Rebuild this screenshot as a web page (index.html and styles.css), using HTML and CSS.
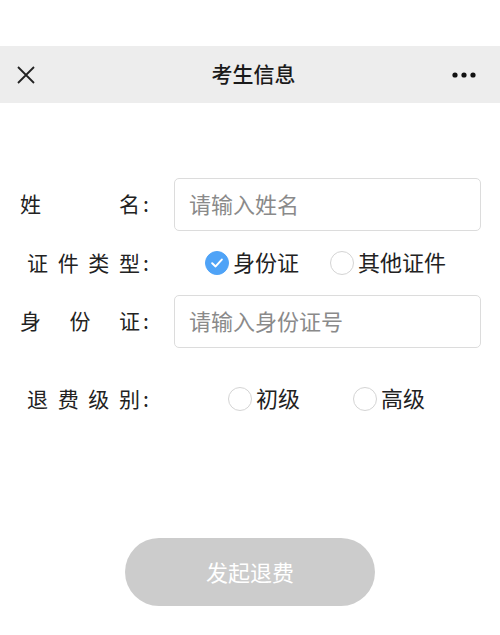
FILE: index.html
```html
<!DOCTYPE html>
<html lang="zh-CN">
<head>
  <meta charset="UTF-8">
  <meta name="viewport" content="width=device-width, initial-scale=1.0">
  <title>考生信息</title>
  <link rel="stylesheet" href="styles.css">
</head>
<body>

<div class="top-space"></div>

<div class="nav-bar">
  <svg class="nav-close" width="18" height="18" viewBox="0 0 18 18">
    <path d="M1 1 L17 17 M17 1 L1 17" stroke="#222" stroke-width="1.8" fill="none"/>
  </svg>
  <div class="nav-title">考生信息</div>
  <svg class="nav-more" width="24" height="6" viewBox="0 0 24 6">
    <circle cx="3" cy="3" r="2.6" fill="#111"/>
    <circle cx="12" cy="3" r="2.6" fill="#111"/>
    <circle cx="21" cy="3" r="2.6" fill="#111"/>
  </svg>
</div>

<div class="form">
  <div class="form-row">
    <label class="form-label" for="name"><span class="label-text">姓名</span>:</label>
    <input type="text" id="name" class="form-input" placeholder="请输入姓名">
  </div>

  <div class="form-row radio-row">
    <span class="form-label spaced"><span class="label-text">证件类型</span>:</span>
    <div class="radio-group group-id">
      <span class="radio-item">
        <span class="radio checked">
          <svg width="12" height="10" viewBox="0 0 12 10">
            <path d="M1.2 5.2 L4.6 8.4 L10.8 1.6" stroke="#fff" stroke-width="2" fill="none" stroke-linecap="round" stroke-linejoin="round"/>
          </svg>
        </span>
        <span class="radio-text">身份证</span>
      </span>
      <span class="radio-item">
        <span class="radio"></span>
        <span class="radio-text">其他证件</span>
      </span>
    </div>
  </div>

  <div class="form-row">
    <label class="form-label" for="idcard"><span class="label-text">身份证</span>:</label>
    <input type="text" id="idcard" class="form-input" placeholder="请输入身份证号">
  </div>

  <div class="form-row radio-row level-row">
    <span class="form-label spaced"><span class="label-text">退费级别</span>:</span>
    <div class="radio-group group-level">
      <span class="radio-item">
        <span class="radio"></span>
        <span class="radio-text">初级</span>
      </span>
      <span class="radio-item">
        <span class="radio"></span>
        <span class="radio-text">高级</span>
      </span>
    </div>
  </div>
</div>

<div class="btn-wrap">
  <button class="submit-btn">发起退费</button>
</div>

</body>
</html>
```

FILE: styles.css
```css
body {
  margin: 0;
  padding: 0;
  background-color: #fff;
  font-family: 'Noto Sans CJK SC', 'Noto Sans', sans-serif;
  color: #222;
}

.top-space {
  height: 46px;
}

.nav-bar {
  height: 57px;
  background-color: #ededed;
  display: flex;
  align-items: center;
  justify-content: space-between;
  padding: 0 24px 0 17px;
}

.nav-title {
  font-size: 21px;
  font-weight: 500;
  color: #1a1a1a;
  margin-left: 20px;
  padding-bottom: 4px;
}

.form {
  padding: 75px 19px 0 20px;
}

.form-row {
  display: flex;
  align-items: center;
}

.form-label {
  width: 130px;
  flex-shrink: 0;
  display: flex;
  font-size: 21px;
  color: #222;
  margin-right: 24px;
  padding-bottom: 3px;
}

.label-text {
  width: 120px;
  margin-right: 3px;
  text-align: justify;
  text-align-last: justify;
}

.form-label.spaced {
  width: 123px;
  padding-left: 7px;
}

.form-label.spaced .label-text {
  width: 113px;
}

.form-input {
  flex: 1;
  height: 53px;
  box-sizing: border-box;
  border: 1px solid #dcdcdc;
  border-radius: 5px;
  padding: 0 14px 3px;
  font-size: 22px;
  font-family: inherit;
  color: #333;
  outline: none;
}

.form-input::placeholder {
  color: #8a8a8a;
}

.radio-row {
  height: 40px;
  margin: 12px 0;
}

.level-row {
  margin-top: 31px;
}

.radio-group {
  display: flex;
  align-items: center;
  font-size: 22px;
  color: #222;
}

.group-id {
  margin-left: 31px;
  gap: 31px;
}

.group-level {
  margin-left: 54px;
  gap: 53px;
}

.radio-item {
  display: flex;
  align-items: center;
  gap: 4px;
}

.radio-text {
  padding-bottom: 4px;
}

.radio {
  width: 24px;
  height: 24px;
  box-sizing: border-box;
  border: 1px solid #d4d4d4;
  border-radius: 50%;
  display: flex;
  align-items: center;
  justify-content: center;
}

.radio.checked {
  background-color: #4fa3f7;
  border-color: #4fa3f7;
}

.btn-wrap {
  display: flex;
  justify-content: center;
  margin-top: 119px;
}

.submit-btn {
  width: 250px;
  height: 68px;
  border: none;
  border-radius: 34px;
  background-color: #cccccc;
  color: #fff;
  font-size: 22px;
  font-family: inherit;
  padding-bottom: 4px;
}
```
